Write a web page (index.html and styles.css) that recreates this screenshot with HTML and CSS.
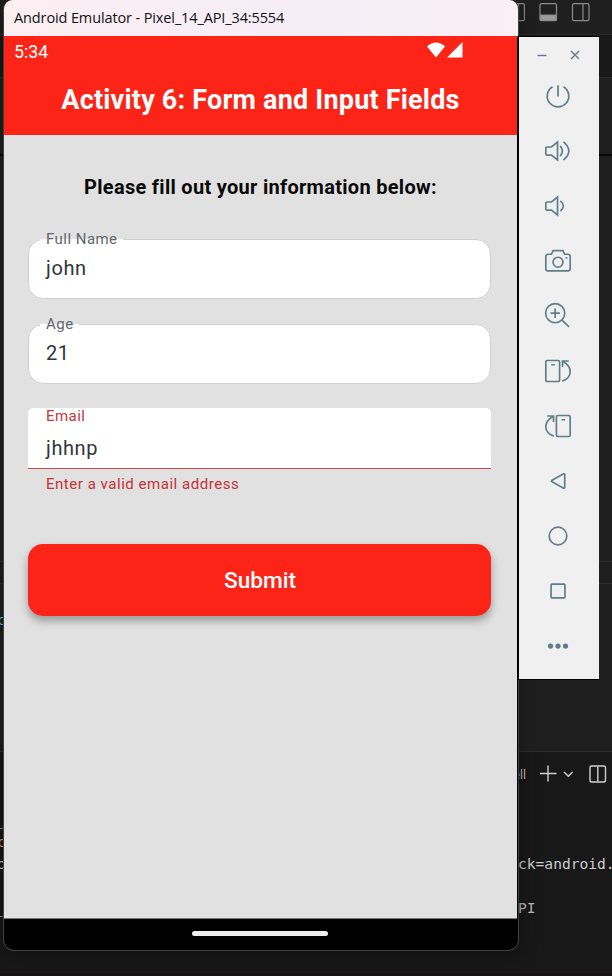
FILE: index.html
```
<!DOCTYPE html>
<html lang="en">
<head>
<meta charset="utf-8">
<title>Android Emulator</title>
<link rel="stylesheet" href="styles.css">
</head>
<body>
<div class="desktop">
  <div class="editor">
    <div class="editor-top">
      <svg width="84" height="24" viewBox="0 0 84 24" fill="none" stroke="#8c8c8c" stroke-width="1.2">
        <rect x="-8" y="3.7" width="16.400" height="17" rx="1.5"/><path d="M2.500 4v16.500"/>
        <rect x="24" y="3.700" width="16.500" height="17" rx="1.500"/><path d="M24.500 15h15.500v5.500h-15.500z" fill="#9a9a9a"/>
        <rect x="56.500" y="3.700" width="16.500" height="17" rx="1.500"/><path d="M67 4v16.500"/>
      </svg>
    </div>
    <div class="editor-tabs"></div>
    <div class="editor-crumbs"></div>
    <div class="editor-code"></div>
    <div class="editor-mid"></div>
    <div class="editor-lower"><span class="edge-code blue">c</span></div>
    <div class="terminal">
      <div class="terminal-bar">
        <span>ell</span>
        <svg width="76" height="22" viewBox="0 0 76 22" fill="none" stroke="#d0d0d0" stroke-width="1.400">
          <path d="M4 10.500h16.500M12 2.500v16M28 9l4.300 4.300L36.600 9"/>
          <rect x="54" y="3" width="15.500" height="16" rx="1.500"/><path d="M61.800 3.500v15"/>
        </svg>
      </div>
      <div class="terminal-body">
        <div class="line"><span class="edge-code">_</span></div>
        <div class="line"><span class="edge-code orange">c</span></div>
        <div class="line"><span class="edge-code">o</span><span class="out">ck=android.</span></div>
        <div class="line"></div>
        <div class="line"><span class="edge-code">_</span><span class="out dim">PI</span></div>
      </div>
    </div>
    <div class="statusbar"></div>
  </div>

  <div class="window">
    <div class="titlebar"><span>Android Emulator - Pixel_14_API_34:5554</span></div>
    <div class="screen">
      <header class="appbar">
        <div class="status">
          <span>5:34</span>
          <svg width="38" height="18" viewBox="0 0 38 18" fill="#fff"><path d="M.8 5.300Q10 -2.400 19.200 5.300L10 16.600z"/><path d="M36.500 1v15.500H21z"/></svg>
        </div>
        <h1><span>Activity 6: Form and Input Fields</span></h1>
      </header>
      <main class="form">
        <h2><span>Please fill out your information below:</span></h2>
        <div class="field"><label><span>Full Name</span></label><span class="value">john</span></div>
        <div class="field"><label><span>Age</span></label><span class="value">21</span></div>
        <div class="field error"><label><span>Email</span></label><span class="value">jhhnp</span></div>
        <p class="help"><span>Enter a valid email address</span></p>
        <div class="submit"><span>Submit</span></div>
      </main>
    </div>
    <div class="navbar"><i></i></div>
  </div>

  <div class="tools">
    <div class="tools-head">
      <svg width="10" height="12" viewBox="0 0 10 12"><path d="M.5 6.500h9"/></svg>
      <svg width="10" height="12" viewBox="0 0 10 12"><path d="M1 2l8 8M9 2l-8 8"/></svg>
    </div>
    <div class="tool"><svg viewBox="0 0 32 32"><path d="M16 4.500v12M10.200 6.200a11.500 11.500 0 1 0 11.600 0"/></svg></div>
    <div class="tool"><svg viewBox="0 0 32 32"><path d="M15.500 6.500v19L9 20.300H4.200q-1.200 0-1.200-1.200v-6.200q0-1.200 1.200-1.200H9zM18.300 10.500q4.700 5.500 0 11M21.800 6.200q11.500 9.800 0 19.600"/></svg></div>
    <div class="tool"><svg viewBox="0 0 32 32"><path d="M15.500 6.500v19L9 20.300H4.200q-1.200 0-1.200-1.200v-6.200q0-1.200 1.200-1.200H9zM18.500 10.500q6.500 5.500 0 11"/></svg></div>
    <div class="tool"><svg viewBox="0 0 32 32"><path d="M5.500 8.800H9L10.700 5h10.600L23 8.800h3.500a2.500 2.500 0 0 1 2.500 2.500v12.700a2.500 2.500 0 0 1-2.500 2.500H5.500a2.500 2.500 0 0 1-2.500-2.500V11.300a2.500 2.500 0 0 1 2.500-2.500z"/><circle cx="16" cy="17.300" r="5.300"/><path d="M24 12.700h2"/></svg></div>
    <div class="tool"><svg viewBox="0 0 32 32"><circle cx="13" cy="13" r="10.200"/><path d="M8 13h10M13 8v10M20.300 20.300l7.500 7.200"/></svg></div>
    <div class="tool"><svg viewBox="0 0 32 32"><rect x="3" y="4.800" width="14.700" height="22.400" rx="1.500"/><path d="M8.800 9.300h3.800M27.500 5.300h-6.700v6.500M21 5.500q8 4.500 8 11.500-.4 7-8.500 9.800"/></svg></div>
    <div class="tool"><svg viewBox="0 0 32 32"><rect x="14.300" y="4.800" width="14.700" height="22.400" rx="1.500"/><path d="M19.800 9.300h3.800M4.500 5.300h6.700v6.500M11 5.500q-8 4.500-8 11.500.4 7 8.500 9.800"/></svg></div>
    <div class="tool"><svg viewBox="0 0 32 32"><path d="M22 8.400q1.200-.4 1.200.8v13.600q0 1.200-1.200.8L9.700 16.900q-1.500-.9 0-1.800L22 8.400z"/></svg></div>
    <div class="tool"><svg viewBox="0 0 32 32"><circle cx="16" cy="16" r="9.400"/></svg></div>
    <div class="tool"><svg viewBox="0 0 32 32"><rect x="8.600" y="8.600" width="14.800" height="14.800" rx="1"/></svg></div>
    <div class="tool"><svg viewBox="0 0 32 32"><g class="dots"><circle cx="8" cy="16" r="2.800"/><circle cx="16" cy="16" r="2.800"/><circle cx="24" cy="16" r="2.800"/></g></svg></div>
  </div>
</div>
</body>
</html>
```
FILE: styles.css
```
* { box-sizing: border-box; }
body { margin: 0; background: #181818; font-family: Roboto, sans-serif; }
.desktop { position: relative; width: 612px; height: 976px; overflow: hidden; }

.editor { display: flex; flex-direction: column; height: 976px; background: #1f1f1f; }
.editor-top { height: 35px; border-bottom: 1px solid #2b2b2b; display: flex; justify-content: flex-end; }
.editor-top svg { margin-right: 12px; width: 84px; }
.editor-tabs { height: 43px; background: #181818; border-bottom: 1px solid #2b2b2b; }
.editor-crumbs { height: 78px; border-bottom: 2px solid #070707; }
.editor-code { height: 406px; border-bottom: 1px solid #2b2b2b; }
.editor-mid { height: 22px; border-bottom: 1px solid #2b2b2b; }
.editor-lower { height: 167px; padding-top: 25px; }
.terminal { height: 223px; background: #181818; border-top: 1px solid #2b2b2b; color: #ccc; }
.terminal-bar { height: 44px; display: flex; align-items: center; justify-content: flex-end; gap: 10px; font: 12px "Open Sans", sans-serif; }
.terminal-bar svg { width: 76px; }
.terminal-body { padding-top: 13px; }
.line { display: flex; height: 22px; align-items: center; font: 14.600px/22px "DejaVu Sans Mono", monospace; }
.edge-code { display: block; width: 5px; height: 22px; overflow: hidden; font: 14.600px/22px "DejaVu Sans Mono", monospace; text-indent: -3px; flex: none; }
.blue { color: #4fc1ff; }
.orange { color: #c9a06c; }
.out { margin-left: 513px; white-space: nowrap; }
.dim { color: #b5b5b5; }
.statusbar { flex: 1; border-top: 1px solid #1b0d14; background: #161616; }

.window { position: absolute; left: 3px; top: 0; width: 516px; height: 951px; border: 1px solid #3f3f3f; border-top: 0; border-radius: 9px 9px 11px 11px; background: #000; overflow: hidden; box-shadow: 0 4px 18px rgba(0,0,0,.4); }
.titlebar { height: 36px; background: linear-gradient(90deg, #fbeff2, #f6edf7 60%, #faeff3); padding: 0 10px; font: 14.500px/36px "Open Sans", sans-serif; color: #111; white-space: nowrap; }
.titlebar span { letter-spacing: -.12px; }
.screen { width: 513px; height: 883px; background: #e1e1e1; border-bottom: 1px solid #777; }
.appbar { height: 99px; background: #fc2317; color: #fff; }
.status { height: 31px; display: flex; align-items: center; justify-content: space-between; padding: 0 53px 0 10px; font-size: 17.800px; }
.status svg { margin-top: -4px; }
h1, h2 { margin: 0; text-align: center; white-space: nowrap; }
h1 { font-size: 27px; line-height: 66px; font-weight: 700; letter-spacing: .2px; }
.form { padding: 36px 26px 0 24px; }
h2 { font-size: 20px; line-height: 32px; font-weight: 700; letter-spacing: .29px; color: #0a0a0a; padding-left: 2px; }
.field { height: 60px; margin-bottom: 25px; background: #fff; border: 1px solid #d0d0d0; border-radius: 15px; padding-left: 11px; }
h2 + .field { margin-top: 36px; }
.field label { display: table; height: 16px; margin: -9px 0 0; padding: 0 5px 0 6px; background: linear-gradient(transparent 8px, #fff 8px); font-size: 15px; line-height: 16px; letter-spacing: .46px; color: #62666b; }
.value { display: block; padding-left: 6px; margin-top: 8px; font-size: 20px; line-height: 26px; letter-spacing: .6px; color: #30353a; }
.field.error { border-radius: 5px 5px 0 0; border: 0; border-bottom: 1.500px solid #c9484a; height: 61px; margin-bottom: 0; padding-left: 12px; }
.error label { margin-top: -1px; color: #c53737; }
.error .value { margin-top: 11px; }
.help { margin: 5px 0 0 18px; font-size: 15px; line-height: 20px; letter-spacing: .53px; color: #c23336; white-space: nowrap; }
.submit { margin-top: 50px; height: 72px; border-radius: 15px; background: #fc2317; color: #fff; display: flex; align-items: center; justify-content: center; padding-left: 1px; font-size: 22.700px; font-weight: 500; box-shadow: 0 5px 8px rgba(0,0,0,.32); }
.navbar { height: 31px; display: flex; justify-content: center; padding: 12px 2px 0 0; }
.navbar i { width: 136px; height: 5px; border-radius: 3px; background: #eee; }

.tools { position: absolute; left: 517px; top: 36px; width: 82px; height: 644px; background: #f0f0f0; border: solid #000; border-width: 1px 0 1px 2px; }
.tools-head { height: 31px; display: flex; align-items: center; justify-content: space-between; padding: 4px 19px 0 18px; }
.tools svg { display: block; fill: none; stroke: #607d8b; stroke-width: 1.800; }
.tools-head svg { stroke-width: 1.400; }
.tool { height: 55px; display: grid; place-items: center; padding-right: 3px; }
.tool svg { width: 30px; height: 30px; }
.tools .dots { fill: #607d8b; stroke: none; }
```
